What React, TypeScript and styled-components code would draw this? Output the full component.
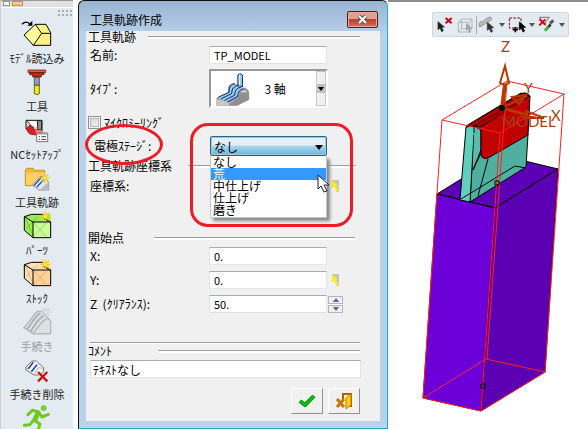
import React from "react";
import styled, { createGlobalStyle } from "styled-components";

const GlobalStyle = createGlobalStyle`
  * { box-sizing: border-box; }
  body { margin: 0; background: #fff; }
  body, button, input, select {
    font-family: "Noto Sans CJK JP", "Liberation Sans", sans-serif;
    font-size: 12px;
    color: #000;
  }
  svg { display: block; }
`;

const Page = styled.div`
  display: flex;
  height: 100vh;
  overflow: hidden;
`;

/* ---------- side toolbar ---------- */

const Sidebar = styled.nav`
  flex: none;
  display: flex;
  flex-direction: column;
  width: 73px;
  margin-right: 5px;
  border-left: 1px solid #d0d0d4;
  background: #e3eaf0;
  overflow: hidden;
`;

const TabStrip = styled.div`
  flex: none;
  display: flex;
  gap: 2px;
  height: 8px;
  padding-left: 2px;
  border-top: 1px solid #9a9a9a;
  border-bottom: 1px solid #fff;
  background: #e0e0e0;
`;

const Tab = styled.span<{ $active?: boolean; $wide?: boolean }>`
  width: ${(p) => (p.$wide ? 11 : 7)}px;
  height: 5px;
  border: 1px solid ${(p) => (p.$active ? "#d09040" : "#8398ac")};
  background: ${(p) => (p.$active ? "#ffc880" : "#fff")};
`;

const Grip = styled.div`
  flex: none;
  align-self: flex-end;
  width: 14px;
  height: 6px;
  margin: 2px 1px 3px 0;
  background:
    linear-gradient(transparent 0 2px, #e3eaf0 2px 4px, transparent 4px),
    repeating-linear-gradient(90deg, #9eb2c6 0 2px, transparent 2px 4px);
`;

const Tool = styled.button<{ $off?: boolean }>`
  flex: none;
  display: flex;
  flex-direction: column;
  align-items: center;
  height: 48px;
  padding: 0;
  border: 0;
  background: none;
  font-size: 11px;
  line-height: 18px;
  white-space: nowrap;
  color: ${(p) => (p.$off ? "#9a9fa3" : "#222")};
`;

/* ---------- dialog ---------- */

const Dialog = styled.form`
  flex: 0 1 310px;
  min-width: 260px;
  align-self: flex-start;
  padding: 0 7px 7px;
  border: 1px solid #111;
  border-right-color: #16b4c8;
  border-bottom-color: #16b4c8;
  border-radius: 6px 6px 0 0;
  background: linear-gradient(#98b4d2, #b9d1ea 34px);
`;

const TitleBar = styled.header`
  display: flex;
  align-items: center;
  justify-content: space-between;
  height: 30px;
  padding: 7px 2px 0 4px;
`;

const Title = styled.h1`
  margin: 0;
  font-size: 12px;
  font-weight: 400;
  line-height: 16px;
`;

const CloseButton = styled.button`
  display: flex;
  align-items: center;
  justify-content: center;
  width: 31px;
  height: 17px;
  padding: 0;
  border: 1px solid #4b1c1c;
  border-radius: 2px;
  box-shadow: inset 0 0 0 1px #e8a89c;
  background: linear-gradient(#e0a090 0 45%, #b8402c 50%, #d07058);
`;

const Body = styled.div`
  padding: 0 19px 7px 2px;
  background: #f0f0f0;
`;

const SectionHeading = styled.h2<{ $top?: number; $label: number; $end?: number }>`
  display: grid;
  grid-template-columns: ${(p) => p.$label}px 1fr;
  align-items: center;
  margin: ${(p) => p.$top ?? 0}px ${(p) => p.$end ?? 1}px 0 0;
  font-size: 12px;
  font-weight: 400;
  line-height: 12px;
  white-space: nowrap;

  &::after {
    content: "";
    height: 2px;
    border-top: 1px solid #9c9c9c;
    background: #fff;
  }
`;

const Rule = styled.hr`
  height: 2px;
  margin: 30px 1px 1px 2px;
  border: 0;
  border-top: 1px solid #9c9c9c;
  background: #fff;
`;

const Row = styled.div<{ $top: number; $height?: number }>`
  display: grid;
  grid-template-columns: 119px 1fr 34px;
  align-items: center;
  height: ${(p) => p.$height ?? 17}px;
  margin: ${(p) => p.$top}px 0 0 2px;
`;

const Label = styled.label<{ $inset?: boolean }>`
  position: relative;
  padding-left: ${(p) => (p.$inset ? 4 : 0)}px;
  line-height: 16px;
  white-space: nowrap;
`;

const TextBox = styled.input`
  width: 100%;
  min-width: 0;
  height: 18px;
  padding: 0 4px;
  border: 1px solid #e0e4ea;
  border-top-color: #a8abb2;
  border-radius: 1px;
  background: #fff;
  font-size: 11px;
  line-height: 15px;
`;

const CommentBox = styled(TextBox)`
  width: calc(100% - 2px);
  margin: 3px 0 0 2px;
  padding: 0 2px;
  display: block;
  font-size: 12px;
`;

const TypePicker = styled.button`
  display: grid;
  grid-template-columns: 43px 1fr 10px;
  align-items: center;
  width: calc(100% + 1px);
  height: 39px;
  padding: 0 0 0 5px;
  border: 2px solid #989898;
  border-right-color: #fff;
  border-bottom-color: #fff;
  background: #fff;
  text-align: left;
`;

const PickerArrow = styled.span`
  display: flex;
  align-items: center;
  justify-content: center;
  align-self: stretch;
  border: 1px solid #c8c8c8;
  background: linear-gradient(#f0f0f0 0 35%, #c0c0c0 35% 65%, #f0f0f0 65%);
`;

const CheckLine = styled.label`
  display: flex;
  align-items: center;
  gap: 3px;
  height: 13px;
  margin-top: 8px;
  line-height: 13px;
`;

const CheckBox = styled.input`
  appearance: none;
  width: 13px;
  height: 13px;
  margin: 0;
  border: 1px solid #8e8f8f;
  box-shadow: inset 0 0 0 1px #f4f4f4, inset 0 0 0 2px #b4b8bc;
  background: linear-gradient(135deg, #d0d5da, #f4f4f4);
`;

const DropDown = styled.div`
  position: relative;
  height: 20px;
  margin-left: 1px;
`;

const StageSelect = styled.select`
  appearance: none;
  display: block;
  width: 100%;
  height: 20px;
  padding: 0 3px;
  border: 1px solid #2c628b;
  border-radius: 2px;
  box-shadow: inset 0 0 0 1px #9cc8dc;
  background: linear-gradient(#e4f1f9 0 45%, #a8d8ee 50%, #70b4d8);
  line-height: 17px;
`;

const SelectArrow = styled.svg`
  position: absolute;
  right: 4px;
  top: 9px;
  pointer-events: none;
`;

const OptionList = styled.ul`
  position: absolute;
  z-index: 2;
  top: 20px;
  left: 0;
  width: 100%;
  margin: 0;
  padding: 0 0 1px;
  border: 1px solid #c0c8d4;
  border-top: 0;
  background: #fff;
  box-shadow: 3px 3px 3px #888;
  list-style: none;
`;

const Option = styled.li<{ $current?: boolean }>`
  padding-left: 2px;
  line-height: 12px;
  color: ${(p) => (p.$current ? "#fff" : "#000")};
  background: ${(p) => (p.$current ? "#3399ff" : "transparent")};
`;

const Pointer = styled.svg`
  position: absolute;
  z-index: 4;
  right: -3px;
  top: 38px;
`;

const SelectMark = styled.span`
  position: absolute;
  z-index: 3;
  top: -13px;
  left: -20px;
  right: -26px;
  height: 104px;
  border: 3px solid #ed1c24;
  border-radius: 18px;
  pointer-events: none;
`;

const LabelMark = styled.span`
  position: absolute;
  top: -14px;
  left: -5px;
  width: 78px;
  height: 41px;
  border: 3px solid #ed1c24;
  border-radius: 50%;
  pointer-events: none;
`;

const PickButton = styled.button`
  width: 10px;
  height: 14px;
  margin-left: 4px;
  padding: 0;
  border: 0;
  background: none;
`;

const Spinner = styled.span`
  display: grid;
  gap: 1px;
  width: 15px;
  margin-left: 1px;
  background: #fff;
`;

const SpinButton = styled.button`
  display: flex;
  align-items: center;
  justify-content: center;
  height: 8px;
  padding: 0;
  border: 1px solid #b4b4b4;
  background: #f0f0f0;
`;

const Actions = styled.footer`
  display: flex;
  justify-content: flex-end;
  gap: 5px;
  margin: 10px 1px 0 0;
`;

const ActionButton = styled.button`
  display: flex;
  align-items: center;
  justify-content: center;
  width: 32px;
  height: 26px;
  padding: 0;
  border: 1px solid #fff;
  border-right-color: #909090;
  border-bottom-color: #909090;
  background: #f0f0f0;
`;

/* ---------- model view ---------- */

const ModelView = styled.main`
  flex: 1;
  min-width: 0;
  border-top: 2px solid #8c8c8c;
`;

const ViewToolbar = styled.div`
  display: flex;
  align-items: center;
  width: fit-content;
  height: 25px;
  margin: 10px 0 0 44px;
  padding: 0 0 0 3px;
  border: 1px solid #d0d6dc;
  border-radius: 2px;
  background: #e3eaf0;
`;

const ViewTool = styled.button<{ $gap?: number }>`
  width: 18px;
  height: 18px;
  margin-right: ${(p) => p.$gap ?? 0}px;
  padding: 0;
  border: 0;
  background: none;
`;

const ViewMenu = styled.button`
  display: flex;
  align-items: center;
  justify-content: center;
  width: 12px;
  height: 18px;
  padding: 0;
  border: 0;
  background: none;
`;

const Divider = styled.span`
  width: 1px;
  height: 18px;
  margin-right: 1px;
  background: #a4a9ae;
`;

const Scene = styled.svg`
  width: 100%;
  height: auto;
`;

/* ---------- drawings ---------- */

const Spark = ({ x, y, color = "#ffc800", core = "#fff5a0" }: { x: number; y: number; color?: string; core?: string }) => (
  <g stroke={color} strokeWidth="3.5" fill="none">
    <path d={`M${x} ${y - 15}v30M${x - 15} ${y}h30M${x - 11} ${y - 11}l22 22M${x + 11} ${y - 11}l-22 22`} />
    <circle cx={x} cy={y} r="5" fill={core} strokeWidth="2" />
  </g>
);

const Block = ({ main, light, line }: { main: string; light: string; line: string }) => (
  <g strokeLinejoin="round">
    <path d="M19 17 45 29V80L19 58Z" fill={light} />
    <path d="M19 17 43 9 98 9V33H45Z" fill={light} />
    <path d="M45 33H98V80H45Z" fill={main} />
    <path d="M24 54 58 17M46 76 86 35M20 18l26 58M46 34l40 44" fill="none" stroke={line} strokeWidth="2" opacity=".45" />
    <path d="M19 17 41 10H76M19 17V58L45 80H98V33H45L19 17M45 33V80M76 22 98 33" fill="none" stroke="#000" strokeWidth="3" />
    <Spark x={82} y={16} />
  </g>
);

const icons: Record<string, React.ReactNode> = {
  load: (
    <g strokeLinejoin="round">
      <path d="M18 48 52 17 71 43 46 79Z" fill="#ffff98" />
      <path d="M52 17H84L98 43H71Z" fill="#fff480" />
      <path d="M46 79 71 43H98V79Z" fill="#fff080" />
      <path d="M18 48 52 16H84L98 41V79H46ZM46 79 71 43H98M71 43 52 16" fill="none" stroke="#000" strokeWidth="3" />
      <path d="M12 16q14-14 25 1" fill="none" stroke="#000" strokeWidth="4" />
      <path d="M28 20h15V5Z" fill="#000" />
    </g>
  ),
  tool: (
    <g stroke="#500" strokeWidth="2">
      <path d="M30 9H83V17H30Z" fill="#e06040" />
      <path d="M35 17H78V23H70V30H44V23H35Z" fill="#b83010" />
      <path d="M49 31H64V55H49Z" fill="#9898b8" stroke="#222" />
      <path d="M49 55H64V80Q57 86 49 80Z" fill="#f4f000" stroke="#222" />
    </g>
  ),
  setup: (
    <g>
      <path d="M24 16H72V48L60 55 24 42Z" fill="#d8d8d8" stroke="#111" strokeWidth="3" />
      <path d="M34 18H56V36H34Z" fill="#fff" />
      <path d="M26 18 36 26V40" fill="none" stroke="#555" strokeWidth="3" />
      <path d="M58 17H71V42L60 48Z" fill="#909090" stroke="#222" strokeWidth="3" />
      <path d="M26 40 36 30 46 36 48 44 72 45V53L56 60 38 58 30 52Z" fill="#d82020" stroke="#800" strokeWidth="2" />
      <path d="M50 46 72 46V52L56 54Z" fill="#ff8888" />
      <path d="M56 54H89V80H56Z" fill="#fff" stroke="#777" strokeWidth="3" />
      <path d="M56 56H89" stroke="#999" strokeWidth="5" />
      <path d="M62 65h4m4 0h14M62 73h4m4 0h14" stroke="#444" strokeWidth="3" />
    </g>
  ),
  path: (
    <g>
      <path d="M22 20 27 16H45L50 22H80V68H22Z" fill="#f4b840" stroke="#b87800" strokeWidth="2" />
      <path d="M24 29H78V66H24Z" fill="#ffcf68" />
      <path d="M44 66 66 40 80 42 92 58V81H62Z" fill="#e4e8ec" stroke="#777" strokeWidth="2" />
      <path d="M48 68 70 43M56 73 78 48" stroke="#1848b8" strokeWidth="4" />
      <path d="M66 80 91 57V80Z" fill="#b8bcc0" />
      <Spark x={80} y={45} />
    </g>
  ),
  part: <Block main="#c8ff98" light="#98ee50" line="#486020" />,
  stock: <Block main="#ffd098" light="#ffe0b8" line="#a05c20" />,
  procedure: (
    <g fill="none" stroke="#b4b8bb" strokeWidth="4">
      <path d="M18 62 44 30Q52 16 60 13H73L98 43V80H46Z" fill="#dce0e3" />
      <path d="M18 62 28 68Q52 30 68 18M28 68 38 74Q62 36 78 26M38 74 46 80Q68 44 88 34M46 80H98" />
      <path d="M28 65Q50 27 65 17M38 71Q60 34 76 24" stroke="#909498" strokeWidth="2" />
      <Spark x={84} y={15} color="#cdd1d4" core="#eee" />
    </g>
  ),
  remove: (
    <g>
      <path d="M24 36 42 18H55L77 38V50L62 60H48L24 45Z" fill="#f4f6f8" stroke="#777" strokeWidth="3" />
      <path d="M30 42 46 22M40 50 57 29" stroke="#1848b8" strokeWidth="5" />
      <path d="M50 56 62 38 76 40" fill="none" stroke="#888" strokeWidth="2" />
      <path d="M60 51 88 79M88 51 60 79" stroke="#d01010" strokeWidth="7" />
    </g>
  ),
  run: (
    <g fill="none" stroke="#70c820" strokeWidth="9" strokeLinecap="round" strokeLinejoin="round">
      <circle cx="77" cy="15" r="6" fill="#84e030" strokeWidth="5" />
      <path d="M30 35 43 22 60 26 72 42 91 34M60 28 48 51 66 64 59 84M48 50 35 65 19 67" />
      <path d="M60 30 51 49" strokeWidth="15" />
    </g>
  ),
};

const tools: { icon: string; text: string; off?: boolean }[] = [
  { icon: "load", text: "ﾓﾃﾞﾙ読込み" },
  { icon: "tool", text: "工具" },
  { icon: "setup", text: "NCｾｯﾄｱｯﾌﾟ" },
  { icon: "path", text: "工具軌跡" },
  { icon: "part", text: "ﾊﾟｰﾂ" },
  { icon: "stock", text: "ｽﾄｯｸ" },
  { icon: "procedure", text: "手続き", off: true },
  { icon: "remove", text: "手続き削除" },
  { icon: "run", text: "" },
];

const Caret = ({ color = "#555" }: { color?: string }) => (
  <svg width="6" height="4" viewBox="0 0 6 4" aria-hidden="true">
    <path d="M0 0H6L3 4Z" fill={color} />
  </svg>
);

const PickIcon = () => (
  <svg width="10" height="14" viewBox="0 0 30 42" aria-hidden="true">
    <path d="M3 3H24V39H3Z" fill="#c4c4c4" />
    <path d="M3 24 12 20 16 39H3Z" fill="#f0f0f0" />
    <path d="M4 4 20 19 15 21 23 35 18 38 11 25 4 28Z" fill="#fff200" />
  </svg>
);

const MachineIcon = () => (
  <svg width="34" height="34" viewBox="34 18 104 102" aria-hidden="true">
    <path d="M37 97 72 80 73 61Q84 48 98 57L112 66Q132 64 134 82V101L98 119H37Z" fill="#a8a8a8" stroke="#666" strokeWidth="2" />
    <path d="M38 100 74 110V120H38Z" fill="#c8c8c8" />
    <path d="M41 94 74 80 77 62Q88 49 100 60L118 68 104 78 100 90 66 108Z" fill="#98d0d8" />
    <path d="M101 26Q108 18 115 26V62L101 58Z" fill="#98d0e0" stroke="#102090" strokeWidth="3" />
    <path d="M106 25V59" stroke="#e8ffff" strokeWidth="3" />
    <g fill="none" stroke="#102090" strokeWidth="3">
      <path d="M41 94 74 79Q73 54 92 53" />
      <path d="M50 99 82 83Q82 60 102 59" />
      <path d="M60 104 91 88Q92 65 110 64" />
      <path d="M69 109 100 92Q102 70 119 69" />
    </g>
    <path d="M72 117 100 98Q106 76 121 72 132 70 134 84V101L100 118Z" fill="#909090" />
    <path d="M112 79Q120 73 127 79" fill="none" stroke="#ddd" strokeWidth="4" />
  </svg>
);

const arrowPath = "l0 24 6-5 5 11 5-3-5-10 8-1Z";

const SceneDrawing = () => (
  <Scene viewBox="388 37 200 392" role="img" aria-label="MODEL">
    <g strokeLinejoin="round">
      <path d="M437 194 500 155 558 169 495 208Z" fill="#5c00b8" stroke="#000" />
      <path d="M437 194 495 208 481 411 423 398Z" fill="#6c00d8" stroke="#500030" />
      <path d="M495 208 558 169 545 372 481 411Z" fill="#5c00b4" stroke="#500030" />
      <path d="M437 194 495 208 558 169" fill="none" stroke="#000" />
      <path d="M474 127 482 125 528 134 526 167 470 202Z" fill="#50b0a0" stroke="#000" />
      <path d="M466 127 475 124 481 127 474 134 470 202 460 200Z" fill="#60cfbc" stroke="#000" />
      <path d="M474 133V126L481 125V150L473 170" fill="#58bcac" stroke="#000" />
      <path d="M466 127 521 94Q526 91 530 96L528 135 488 158Q481 160 481 153V130L474 126Z" fill="#c00000" stroke="#000" />
      <path d="M466 126 521 93 530 96 482 126Z" fill="#900000" stroke="#000" />
      <path d="M470 126 526 94M478 126 530 98" stroke="#d00000" />
      <path d="M488 159 478 196M461 199 515 166 526 168" fill="none" stroke="#000" />
      <path d="M481 153 473 170" stroke="#000" />
    </g>
    <g fill="none" stroke="#ff2020">
      <path d="M507 81 564 94 500 133 442 120Z" />
      <path d="M442 120 423 398 481 411 545 372 564 94" />
      <path d="M500 133 481 411M507 81 487 359M423 398 486 359 545 372" />
    </g>
    <g stroke="#b83800" fill="none">
      <path d="M502 108 505 84" strokeWidth="4" />
      <path d="M505 66 500 83Q505 86 509 83Z" strokeWidth="2" />
      <path d="M502 108 527 96" strokeWidth="2" />
      <path d="M526 95 512 97 519 104Z" strokeWidth="2" />
      <path d="M502 108 527 115" strokeWidth="3" />
      <path d="M544 118 526 111 528 118Z" strokeWidth="2" />
    </g>
    <circle cx="502" cy="108" r="3" fill="#000" />
    <g fill="#a84410" fontFamily="Lato, sans-serif" fontSize="15">
      <text x="501" y="52">Z</text>
      <text x="524" y="93" fontSize="14">Y</text>
      <text x="551" y="121">X</text>
      <text x="502" y="127">MODEL</text>
    </g>
    <path d="M495 181H499V185H495ZM481 384H485V388H481Z" fill="none" stroke="#000" />
  </Scene>
);

const stages = ["なし", "荒", "中仕上げ", "仕上げ", "磨き"];

export default function App() {
  return (
    <Page>
      <GlobalStyle />
      <Sidebar>
        <TabStrip>
          <Tab />
          <Tab $active $wide />
        </TabStrip>
        <Grip />
        {tools.map((t) => (
          <Tool key={t.icon} type="button" $off={t.off} disabled={t.off} aria-label={t.text || "実行"}>
            <svg width="39" height="30" viewBox="0 0 117 90" aria-hidden="true">
              {icons[t.icon]}
            </svg>
            {t.text}
          </Tool>
        ))}
      </Sidebar>

      <Dialog onSubmit={(e) => e.preventDefault()}>
        <TitleBar>
          <Title>工具軌跡作成</Title>
          <CloseButton type="button" aria-label="閉じる">
            <svg width="11" height="9" viewBox="0 0 11 9" aria-hidden="true">
              <path d="M2 1 9 8M9 1 2 8" stroke="#555" strokeWidth="4" />
              <path d="M2 1 9 8M9 1 2 8" stroke="#fff" strokeWidth="2" />
            </svg>
          </CloseButton>
        </TitleBar>
        <Body>
          <SectionHeading $label={60}>工具軌跡</SectionHeading>
          <Row $top={3}>
            <Label htmlFor="name">名前:</Label>
            <TextBox id="name" defaultValue="TP_MODEL" />
          </Row>
          <Row $top={6} $height={39}>
            <Label htmlFor="type">ﾀｲﾌﾟ:</Label>
            <TypePicker id="type" type="button">
              <MachineIcon />
              <span>&nbsp; 3 軸</span>
              <PickerArrow>
                <Caret color="#000" />
              </PickerArrow>
            </TypePicker>
          </Row>
          <CheckLine>
            <CheckBox type="checkbox" />
            ﾏｲｸﾛﾐｰﾘﾝｸﾞ
          </CheckLine>
          <Row $top={7} $height={20}>
            <Label htmlFor="stage" $inset>
              電極ｽﾃｰｼﾞ:
              <LabelMark />
            </Label>
            <DropDown>
              <StageSelect id="stage" defaultValue="なし">
                {stages.map((s) => (
                  <option key={s}>{s}</option>
                ))}
              </StageSelect>
              <SelectArrow width="8" height="5" viewBox="0 0 8 5" aria-hidden="true">
                <path d="M0 0H8L4 5Z" fill="#000" />
              </SelectArrow>
              <OptionList role="listbox" aria-label="電極ステージ">
                {stages.map((s) => (
                  <Option key={s} role="option" aria-selected={s === "荒"} $current={s === "荒"}>
                    {s}
                  </Option>
                ))}
              </OptionList>
              <SelectMark />
              <Pointer width="13" height="19" viewBox="0 0 13 19" aria-hidden="true">
                <path d="M1 1V15L4 12 7 18 10 17 7 11H12Z" fill="#fff" stroke="#223" />
              </Pointer>
            </DropDown>
          </Row>
          <SectionHeading $top={4} $label={100} $end={5}>
            工具軌跡座標系
          </SectionHeading>
          <Row $top={5}>
            <Label as="span">座標系:</Label>
            <span />
            <PickButton type="button" aria-label="座標系を選択">
              <PickIcon />
            </PickButton>
          </Row>
          <SectionHeading $top={38} $label={66} $end={6}>
            開始点
          </SectionHeading>
          <Row $top={3}>
            <Label htmlFor="x">X:</Label>
            <TextBox id="x" defaultValue="0." />
          </Row>
          <Row $top={7}>
            <Label htmlFor="y">Y:</Label>
            <TextBox id="y" defaultValue="0." />
            <PickButton type="button" aria-label="開始点を選択">
              <PickIcon />
            </PickButton>
          </Row>
          <Row $top={7}>
            <Label htmlFor="z">Z&nbsp; (ｸﾘｱﾗﾝｽ):</Label>
            <TextBox id="z" defaultValue="50." />
            <Spinner>
              <SpinButton type="button" aria-label="増やす">
                <svg width="6" height="4" viewBox="0 0 6 4" aria-hidden="true">
                  <path d="M0 4H6L3 0Z" fill="#4860b8" />
                </svg>
              </SpinButton>
              <SpinButton type="button" aria-label="減らす">
                <Caret color="#4860b8" />
              </SpinButton>
            </Spinner>
          </Row>
          <Rule />
          <SectionHeading as="label" htmlFor="comment" $label={70}>
            ｺﾒﾝﾄ
          </SectionHeading>
          <CommentBox id="comment" defaultValue="ﾃｷｽﾄなし" />
          <Actions>
            <ActionButton type="submit" aria-label="OK">
              <svg width="16" height="12" viewBox="0 0 16 12" aria-hidden="true">
                <path d="M1 6 6 10 15 1" fill="none" stroke="#008800" strokeWidth="4" />
                <path d="M1 6 6 10 15 1" fill="none" stroke="#10c810" strokeWidth="2" />
              </svg>
            </ActionButton>
            <ActionButton type="button" aria-label="キャンセル">
              <svg width="18" height="18" viewBox="0 0 18 18" aria-hidden="true">
                <path d="M8 8V2H16V14H14" fill="#fff8c0" stroke="#b06000" strokeWidth="2" />
                <path d="M11 6 16 2V13L11 17Z" fill="#ffd400" stroke="#c07800" />
                <path d="M2 7 9 15M9 7 2 15" stroke="#c87800" strokeWidth="3" />
              </svg>
            </ActionButton>
          </Actions>
        </Body>
      </Dialog>

      <ModelView>
        <ViewToolbar>
          <ViewTool type="button" aria-label="選択解除" $gap={3}>
            <svg width="18" height="18" viewBox="18 28 54 54" aria-hidden="true">
              <path d={"M24 45" + arrowPath} fill="#222" stroke="#222" strokeWidth="2" />
              <path d="M47 34 65 50M65 34 47 50" stroke="#d80010" strokeWidth="6" />
            </svg>
          </ViewTool>
          <ViewTool type="button" aria-label="立体選択" $gap={1}>
            <svg width="18" height="18" viewBox="84 28 54 54" aria-hidden="true">
              <path d="M88 47H120V76H88ZM88 47 98 37H129V65L120 76M120 47 129 37M98 37V66H129M88 76 98 66" fill="none" stroke="#b4b8bc" strokeWidth="3" />
              <path d={"M111 49" + arrowPath} fill="#a0a4a8" />
            </svg>
          </ViewTool>
          <Divider />
          <ViewTool type="button" aria-label="面選択">
            <svg width="18" height="18" viewBox="147 28 54 54" aria-hidden="true">
              <path d="M150 51Q152 42 160 45L174 34Q182 28 188 34 189 39 184 43L164 54Q158 62 150 60Z" fill="#b8b8b8" stroke="#888" strokeWidth="2" />
              <path d={"M175 47" + arrowPath} fill="#333" stroke="#333" strokeWidth="2" />
            </svg>
          </ViewTool>
          <ViewMenu type="button" aria-label="面選択メニュー"><Caret /></ViewMenu>
          <ViewTool type="button" aria-label="範囲選択">
            <svg width="18" height="18" viewBox="237 28 54 54" aria-hidden="true">
              <path d="M241 34H276V64H241Z" fill="none" stroke="#800010" strokeWidth="3" strokeDasharray="8 4" />
              <path d="M251 69H267M259 61V77" stroke="#000" strokeWidth="5" />
              <path d={"M271 46" + arrowPath} fill="#000" stroke="#000" strokeWidth="2" />
            </svg>
          </ViewTool>
          <ViewMenu type="button" aria-label="範囲選択メニュー"><Caret /></ViewMenu>
          <ViewTool type="button" aria-label="フィルター">
            <svg width="18" height="18" viewBox="327 28 54 54" aria-hidden="true">
              <path d="M331 32H361L349 47V56L343 50Z" fill="#eee" stroke="#333" strokeWidth="2" />
              <path d="M332 38 349 54M349 38 331 56" stroke="#d80010" strokeWidth="6" />
              <path d="M363 50 373 41" stroke="#555" strokeWidth="9" />
              <path d="M349 71 365 53" stroke="#333" strokeWidth="8" />
              <path d="M348 73 359 61" stroke="#30d820" strokeWidth="6" />
            </svg>
          </ViewTool>
          <ViewMenu type="button" aria-label="フィルターメニュー"><Caret /></ViewMenu>
        </ViewToolbar>
        <SceneDrawing />
      </ModelView>
    </Page>
  );
}
